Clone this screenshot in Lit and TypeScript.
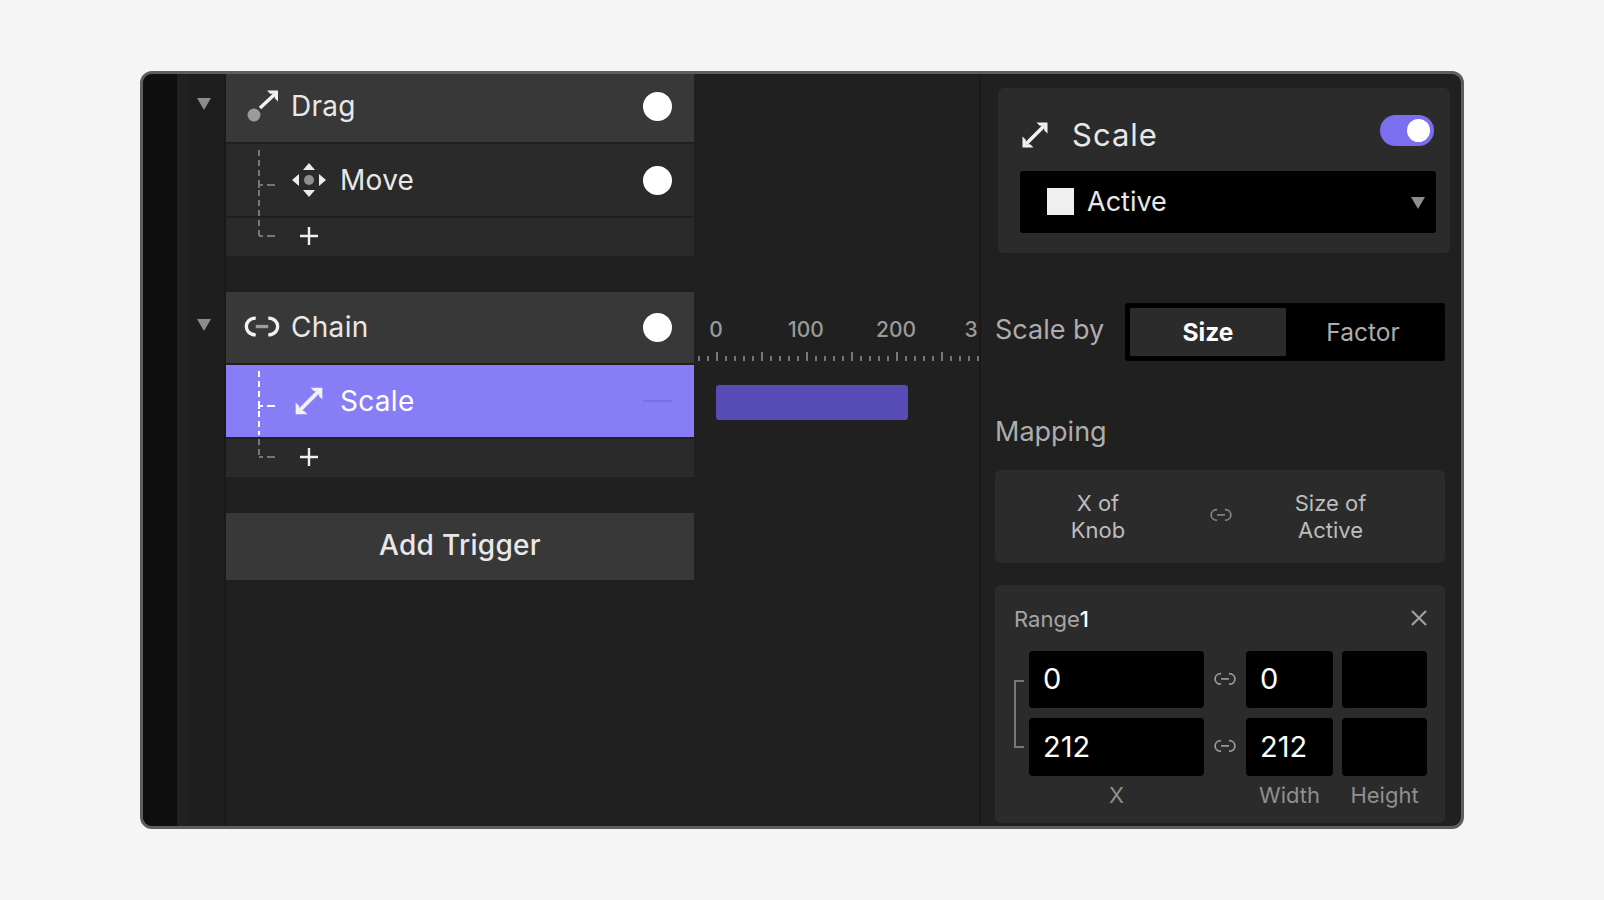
import { LitElement, css, html, svg } from 'lit';
import { customElement } from 'lit/decorators.js';

const linkIcon = (width: number, side: string, mid: string, weight: number) => html`
  <svg width="${width}" height="${width * 0.66}" viewBox="0 0 36 24" fill="none" stroke-width="${weight}">
    <path d="M12 4 C6 4 3 8 3 12 C3 16 6 20 12 20" stroke="${side}" />
    <path d="M24 4 C30 4 33 8 33 12 C33 16 30 20 24 20" stroke="${side}" />
    <path d="M12 12 H24" stroke="${mid}" />
  </svg>
`;

const scaleIcon = (size: number) => html`
  <svg width="${size}" height="${size}" viewBox="0 0 30 30" fill="#f2f2f2">
    <path d="M6 24 L24 6" stroke="#f2f2f2" stroke-width="3.6" />
    <path d="M16.5 2.5 H27.5 V13.5 L24.2 10.2 V5.8 H19.8 Z" />
    <path d="M13.5 27.5 H2.5 V16.5 L5.8 19.8 V24.2 H10.2 Z" />
  </svg>
`;

const dragIcon = html`
  <svg width="36" height="36" viewBox="0 0 36 36" fill="#f2f2f2">
    <circle cx="10" cy="27" r="6.5" fill="#9b9b9b" />
    <path d="M16 20 L31 6" stroke="#f2f2f2" stroke-width="3.4" />
    <path d="M23 2.5 H34 V13.5 L30.8 10.3 V5.7 H26.2 Z" />
  </svg>
`;

const moveIcon = html`
  <svg width="36" height="36" viewBox="0 0 36 36">
    <path d="M18 1 L24 8 H12 Z M18 35 L12 28 H24 Z M1 18 L8 12 V24 Z M35 18 L28 24 V12 Z" fill="#ececec" />
    <circle cx="18" cy="18" r="5" fill="#8f8f8f" />
  </svg>
`;

const plusIcon = html`
  <svg width="36" height="20" viewBox="0 0 36 20" stroke="#f0f0f0" stroke-width="2.4">
    <path d="M9 10 H27 M18 1 V19" />
  </svg>
`;

// dashed connector that hangs off the parent trigger
const treeLines = (top: string) => html`
  <svg class="tree" width="24" height="96" viewBox="0 0 24 96" fill="none" stroke-width="2">
    <path d="M3 6 V${top === '#ffffff' ? 70 : 92}" stroke="${top}" stroke-dasharray="6 4" />
    <path d="M3 44 V41 H7 M11 41 H19" stroke="${top}" />
    ${top === '#ffffff' ? svg`<path d="M3 74 V92" stroke="#777" stroke-dasharray="6 4" />` : ''}
    <path d="M3 92 H7 M11 92 H19" stroke="#777" />
  </svg>
`;

const caret = (cls: string) => html`<span class="caret ${cls}"></span>`;

@customElement('app-root')
export class AppRoot extends LitElement {
  static styles = css`
    :host {
      display: block;
      height: 900px;
      padding-top: 71px;
      box-sizing: border-box;
      background: #f5f5f5;
      font-family: Inter, 'Liberation Sans', sans-serif;
      color: #e8e8e8;
    }

    .frame {
      display: flex;
      box-sizing: border-box;
      width: 1324px;
      height: 758px;
      margin-left: 140px;
      border: 3px solid #5e5e5e;
      border-radius: 12px;
      overflow: hidden;
      background: #202020;
    }

    .rail_dark {
      width: 34px;
      background: #0f0f0f;
    }

    .rail_mid {
      width: 10px;
      background: #212121;
    }

    .rail_carets {
      display: flex;
      flex-direction: column;
      align-items: center;
      box-sizing: border-box;
      width: 39px;
      padding-right: 4px;
      border-right: 2px solid #1a1a1a;
      background: #1e1e1e;
    }

    .caret {
      width: 0;
      height: 0;
      border-left: 7.5px solid transparent;
      border-right: 7.5px solid transparent;
      border-top: 12px solid #8c8c8c;
    }

    .caret_first {
      margin-top: 24px;
    }

    .caret_second {
      margin-top: 209px;
    }

    /* Trigger list */
    .list {
      width: 468px;
      flex: none;
    }

    .group {
      position: relative;
      display: flex;
      flex-direction: column;
      gap: 2px;
    }

    .group_second {
      margin-top: 36px;
    }

    .tree {
      position: absolute;
      left: 30px;
    }

    .group .tree {
      top: 70px;
    }

    .group_second .tree {
      top: 73px;
    }

    .row {
      display: flex;
      align-items: center;
      box-sizing: border-box;
      padding-right: 22px;
      font-size: 28px;
      letter-spacing: 0.3px;
      background: #2a2a2a;
    }

    .row__label {
      margin-right: auto;
    }

    .row_parent {
      height: 68px;
      padding-left: 18px;
      padding-bottom: 4px;
      gap: 11px;
      background: #383838;
    }

    .group_second .row_parent {
      height: 71px;
      padding-left: 17px;
      padding-bottom: 1px;
      gap: 10px;
    }

    .row_child {
      height: 72px;
      padding-left: 65px;
      gap: 13px;
    }

    .row_selected {
      background: #877df7;
      color: #fff;
    }

    .row_selected .row__icon {
      display: flex;
      justify-content: center;
      width: 36px;
    }

    .row_add {
      height: 38px;
      padding-left: 65px;
      padding-bottom: 2px;
    }

    .dot {
      width: 29px;
      height: 29px;
      border-radius: 50%;
      background: #fff;
    }

    .dash {
      width: 29px;
      height: 2px;
      background: #7a6ee8;
    }

    .add-trigger {
      display: flex;
      align-items: center;
      justify-content: center;
      box-sizing: border-box;
      height: 67px;
      margin-top: 36px;
      padding-bottom: 3px;
      font-size: 28px;
      font-weight: 500;
      letter-spacing: 0.3px;
      background: #383838;
    }

    /* Timeline */
    .timeline {
      box-sizing: border-box;
      width: 285px;
      flex: none;
      padding-top: 244px;
      overflow: hidden;
    }

    .ruler {
      display: flex;
      margin-left: -23px;
      font-size: 21px;
      font-weight: 500;
      line-height: 24px;
      color: #9a9a9a;
    }

    .ruler__mark {
      flex: none;
      width: 90px;
      text-align: center;
    }

    .ruler__mark_cut {
      width: 60px;
    }

    .ticks {
      display: block;
      margin-top: 10px;
    }

    .bar {
      width: 192px;
      height: 35px;
      margin: 24px 0 0 22px;
      border-radius: 3px;
      background: #574bb5;
    }

    /* Inspector */
    .inspector {
      flex: none;
      box-sizing: border-box;
      width: 482px;
      padding: 14px 16px 0 14px;
      border-left: 2px solid #1a1a1a;
    }

    .card {
      border-radius: 6px;
      background: #2b2b2b;
    }

    .card_layer {
      box-sizing: border-box;
      width: 452px;
      height: 165px;
      margin-left: 3px;
      padding: 0 14px 0 22px;
    }

    .layer-title {
      display: flex;
      align-items: center;
      gap: 22px;
      box-sizing: border-box;
      height: 83px;
      padding: 10px 2px 0 0;
      font-size: 31px;
      letter-spacing: 1px;
    }

    .layer-title__text {
      margin-right: auto;
    }

    .toggle {
      position: relative;
      width: 54px;
      height: 31px;
      margin-top: -9px;
      border-radius: 16px;
      background: #7b6ff0;
    }

    .toggle::after {
      content: '';
      position: absolute;
      top: 4px;
      right: 4px;
      width: 23px;
      height: 23px;
      border-radius: 50%;
      background: #fff;
    }

    .select {
      position: relative;
      display: flex;
      align-items: center;
      gap: 13px;
      box-sizing: border-box;
      height: 62px;
      padding: 0 0 1px 27px;
      border-radius: 3px;
      font-size: 27px;
      background: #000;
    }

    .select__swatch {
      width: 27px;
      height: 27px;
      background: #efefef;
    }

    .select .caret {
      position: absolute;
      right: 11px;
      top: 26px;
    }

    .scale-by {
      display: flex;
      align-items: center;
      margin-top: 50px;
      font-size: 27px;
      color: #adadad;
    }

    .scale-by__label {
      width: 130px;
      flex: none;
      padding-bottom: 6px;
    }

    .segment {
      display: flex;
      box-sizing: border-box;
      width: 320px;
      height: 58px;
      padding: 5px;
      border-radius: 3px;
      background: #000;
      font-size: 24.5px;
    }

    .segment__item {
      display: flex;
      flex: 1;
      align-items: center;
      justify-content: center;
    }

    .segment__item_active {
      flex: none;
      width: 156px;
      font-weight: 700;
      color: #fff;
      background: #2b2b2b;
    }

    .section-title {
      margin-top: 54px;
      font-size: 27px;
      line-height: 34px;
      color: #adadad;
    }

    .mapping {
      display: grid;
      grid-template-columns: 206px 40px 1fr;
      align-items: center;
      box-sizing: border-box;
      height: 93px;
      margin-top: 21px;
      padding-right: 25px;
      font-size: 22px;
      line-height: 27px;
      text-align: center;
      color: #bdbdbd;
    }

    .mapping__link {
      display: flex;
      justify-content: center;
      padding-bottom: 3px;
    }

    .card_range {
      box-sizing: border-box;
      height: 238px;
      margin-top: 22px;
      padding: 20px 17px 0 19px;
    }

    .range-title {
      display: flex;
      align-items: center;
      justify-content: space-between;
      height: 28px;
      font-size: 22px;
      color: #a5a5a5;
    }

    .range-title b {
      font-weight: 500;
      color: #fff;
    }

    .range-title svg {
      margin-bottom: 2px;
    }

    .range-grid {
      display: grid;
      grid-template-columns: 15px 175px 42px 87px 94px;
      grid-template-rows: 57px 58px auto;
      row-gap: 10px;
      margin-top: 18px;
    }

    .range-grid__bracket {
      grid-row: 1 / span 2;
      align-self: center;
      box-sizing: border-box;
      width: 10px;
      height: 68px;
      border: 2px solid #777;
      border-right: 0;
    }

    .field {
      display: flex;
      align-items: center;
      padding: 0 0 2px 14px;
      border-radius: 4px;
      font-size: 29px;
      color: #fff;
      background: #000;
    }

    .field_last {
      margin-left: 9px;
    }

    .range-grid__link {
      display: flex;
      align-items: center;
      justify-content: center;
      padding-bottom: 2px;
    }

    .range-grid__label {
      margin-top: -3px;
      font-size: 22px;
      line-height: 24px;
      text-align: center;
      color: #8f8f8f;
    }

    .range-grid__label_last {
      margin-left: 9px;
    }

    .spacer {
      grid-column: 1;
    }
  `;

  renderTicks() {
    const ticks = [];
    for (let i = 0; i < 32; i++) {
      const x = 4 + i * 9;
      const big = (i - 2) % 5 === 0;
      ticks.push(svg`<rect x="${x}" y="${big ? 0 : 4}" width="2" height="${big ? 9 : 5}" fill="#777" />`);
    }
    return html`<svg class="ticks" width="285" height="9">${ticks}</svg>`;
  }

  render() {
    return html`
      <div class="frame">
        <div class="rail_dark"></div>
        <div class="rail_mid"></div>
        <div class="rail_carets">
          ${caret('caret_first')} ${caret('caret_second')}
        </div>

        <div class="list">
          <div class="group">
            <div class="row row_parent">
              ${dragIcon}<span class="row__label">Drag</span><span class="dot"></span>
            </div>
            <div class="row row_child">
              ${moveIcon}<span class="row__label">Move</span><span class="dot"></span>
            </div>
            <div class="row row_add">${plusIcon}</div>
            ${treeLines('#777')}
          </div>

          <div class="group group_second">
            <div class="row row_parent">
              ${linkIcon(38, '#f2f2f2', '#9b9b9b', 3.2)}<span class="row__label">Chain</span><span class="dot"></span>
            </div>
            <div class="row row_child row_selected">
              <span class="row__icon">${scaleIcon(32)}</span><span class="row__label">Scale</span><span class="dash"></span>
            </div>
            <div class="row row_add">${plusIcon}</div>
            ${treeLines('#ffffff')}
          </div>

          <div class="add-trigger">Add Trigger</div>
        </div>

        <div class="timeline">
          <div class="ruler">
            <span class="ruler__mark">0</span>
            <span class="ruler__mark">100</span>
            <span class="ruler__mark">200</span>
            <span class="ruler__mark ruler__mark_cut">3</span>
          </div>
          ${this.renderTicks()}
          <div class="bar"></div>
        </div>

        <div class="inspector">
          <div class="card card_layer">
            <div class="layer-title">
              ${scaleIcon(30)}
              <span class="layer-title__text">Scale</span>
              <span class="toggle"></span>
            </div>
            <div class="select">
              <span class="select__swatch"></span>
              <span>Active</span>
              ${caret('')}
            </div>
          </div>

          <div class="scale-by">
            <span class="scale-by__label">Scale by</span>
            <div class="segment">
              <span class="segment__item segment__item_active">Size</span>
              <span class="segment__item">Factor</span>
            </div>
          </div>

          <div class="section-title">Mapping</div>
          <div class="card mapping">
            <span>X of<br />Knob</span>
            <span class="mapping__link">${linkIcon(24, '#8a8a8a', '#8a8a8a', 2.4)}</span>
            <span>Size of<br />Active</span>
          </div>

          <div class="card card_range">
            <div class="range-title">
              <span>Range<b>1</b></span>
              <svg width="18" height="18" viewBox="0 0 18 18" stroke="#a0a0a0" stroke-width="2.2">
                <path d="M2 2 L16 16 M16 2 L2 16" />
              </svg>
            </div>
            <div class="range-grid">
              <span class="range-grid__bracket"></span>
              <span class="field">0</span>
              <span class="range-grid__link">${linkIcon(24, '#9a9a9a', '#9a9a9a', 2.6)}</span>
              <span class="field">0</span>
              <span class="field field_last"></span>

              <span class="field">212</span>
              <span class="range-grid__link">${linkIcon(24, '#9a9a9a', '#9a9a9a', 2.6)}</span>
              <span class="field">212</span>
              <span class="field field_last"></span>

              <span class="spacer"></span>
              <span class="range-grid__label">X</span>
              <span></span>
              <span class="range-grid__label">Width</span>
              <span class="range-grid__label range-grid__label_last">Height</span>
            </div>
          </div>
        </div>
      </div>
    `;
  }
}
